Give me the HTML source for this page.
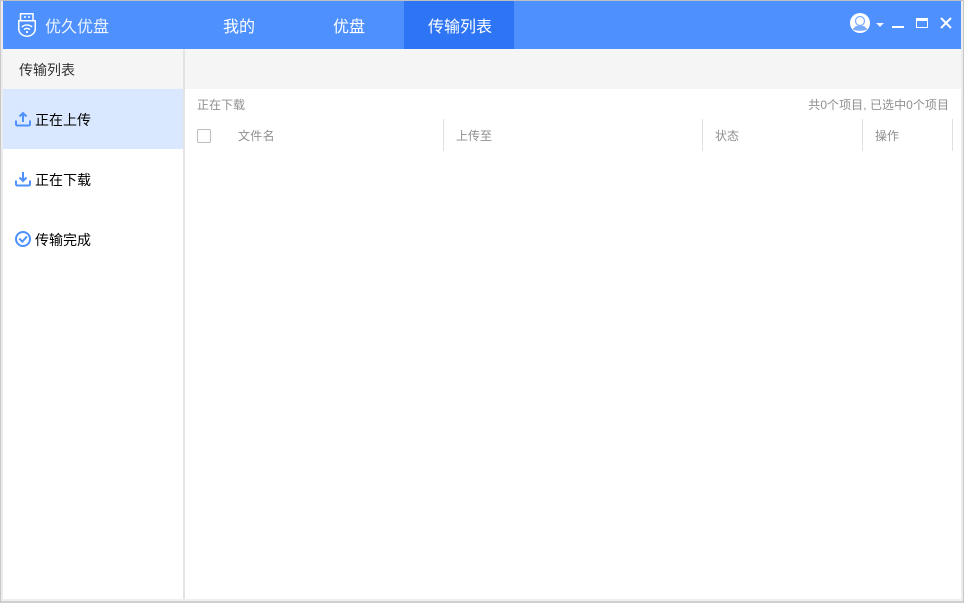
<!DOCTYPE html>
<html><head><meta charset="utf-8">
<style>
html,body{margin:0;padding:0;width:964px;height:603px;overflow:hidden;background:#fff}
body{position:relative;font-family:"Liberation Sans","Noto Sans CJK SC","WenQuanYi Zen Hei",sans-serif}
.a{position:absolute;white-space:nowrap}
.t{line-height:20px;height:20px}
.g{color:#8f8f8f;font-size:12px}
.s{font-size:14px;color:#000}
.n{font-size:16px;color:#fff;line-height:24px;height:24px}
.v{width:1px;background:#e0e0e0;top:119px;height:32px}
</style></head><body>
<div class="a" style="left:0;top:0;width:964px;height:1px;background:#c0c0c0"></div>
<div class="a" style="left:0;top:601px;width:964px;height:2px;background:#cfcfcf"></div>
<div class="a" style="left:0;top:0;width:1px;height:603px;background:#c8c8c8"></div>
<div class="a" style="left:1px;top:1px;width:2px;height:600px;background:#ececec"></div>
<div class="a" style="left:961px;top:1px;width:2px;height:600px;background:#ececec"></div>
<div class="a" style="left:963px;top:0;width:1px;height:603px;background:#c8c8c8"></div>
<div class="a" style="left:3px;top:599px;width:958px;height:2px;background:#efefef"></div>

<div class="a" style="left:3px;top:1px;width:958px;height:48px;background:#4d90fe"></div>
<div class="a" style="left:404px;top:1px;width:110px;height:48px;background:#2e75f5"></div>

<svg class="a" style="left:17px;top:12px" width="20" height="26" viewBox="0 0 20 26" fill="none" stroke="#fff">
<path d="M3.500 8.500V1.750h12.500v6.750" stroke-width="1.500"/>
<path d="M7 5h2M11 5h2" stroke-width="1.500"/>
<path d="M1.750 8.750h16.500v8c0 4-3.700 7.500-8.250 7.500s-8.250-3.500-8.250-7.500z" stroke-width="1.500"/>
<path d="M4.800 15c3-2.800 7.400-2.800 10.400 0M7 17.500c1.900-1.400 4.100-1.400 6 0" stroke-width="1.400"/>
<circle cx="10" cy="20" r="1.100" fill="#fff" stroke="none"/>
</svg>
<div class="a n" style="left:45px;top:16px;color:#eef4ff">优久优盘</div>
<div class="a n" style="left:223px;top:16px">我的</div>
<div class="a n" style="left:333px;top:16px">优盘</div>
<div class="a n" style="left:428px;top:16px">传输列表</div>

<svg class="a" style="left:850px;top:13px" width="20" height="20" viewBox="0 0 20 20">
<circle cx="10" cy="10" r="10" fill="#fff"/>
<circle cx="10" cy="8" r="4.500" fill="#fff" stroke="#7aacfe" stroke-width="1.200"/>
<path d="M2.800 16.500c1.500-3 4-4 7.200-4s5.700 1 7.200 4c-2 1-4.500 1.300-7.200 1.300s-5.200-.3-7.200-1.300z" fill="#7aacfe"/>
</svg>
<div class="a" style="left:876px;top:23px;width:0;height:0;border-left:4px solid transparent;border-right:4px solid transparent;border-top:4px solid #eef4ff"></div>
<div class="a" style="left:892px;top:26px;width:12px;height:2px;background:#fff"></div>
<div class="a" style="left:916px;top:18px;width:10px;height:6px;border:1px solid #fff;border-top-width:3px"></div>
<svg class="a" style="left:940px;top:17px" width="12" height="12" viewBox="0 0 12 12"><path d="M1 1l10 10M11 1L1 11" stroke="#fff" stroke-width="2"/></svg>

<div class="a" style="left:3px;top:49px;width:180px;height:40px;background:#f5f5f5"></div>
<div class="a" style="left:185px;top:49px;width:776px;height:40px;background:#f5f5f5"></div>
<div class="a" style="left:183px;top:49px;width:2px;height:550px;background:#e3e3e3"></div>
<div class="a" style="left:3px;top:89px;width:180px;height:60px;background:#d9e8ff"></div>

<div class="a t" style="left:19px;top:60px;font-size:14px;color:#333">传输列表</div>

<svg class="a" style="left:15px;top:111px" width="16" height="16" viewBox="0 0 16 16" fill="none" stroke="#4d90fe" stroke-width="2">
<path d="M8 11V2M4.500 5.500L8 2l3.500 3.500"/><path d="M1 9.500V13c0 1 .6 1.500 1.500 1.500h11c.9 0 1.500-.5 1.500-1.500V9.500"/></svg>
<div class="a t s" style="left:35px;top:110px">正在上传</div>

<svg class="a" style="left:15px;top:171px" width="16" height="16" viewBox="0 0 16 16" fill="none" stroke="#4d90fe" stroke-width="2">
<path d="M8 1v9M4.500 6.500L8 10l3.500-3.500"/><path d="M1 9.500V13c0 1 .6 1.500 1.500 1.500h11c.9 0 1.500-.5 1.500-1.500V9.500"/></svg>
<div class="a t s" style="left:35px;top:170px">正在下载</div>

<svg class="a" style="left:15px;top:231px" width="16" height="16" viewBox="0 0 16 16" fill="none" stroke="#4d90fe" stroke-width="2">
<circle cx="8" cy="8" r="7"/><path d="M4.300 7.500L7.300 10.700 11.900 5.500" stroke-width="2"/></svg>
<div class="a t s" style="left:35px;top:230px">传输完成</div>

<div class="a t g" style="left:197px;top:95px">正在下载</div>
<div class="a t g" style="right:15px;top:95px;letter-spacing:.05px">共0个项目, 已选中0个项目</div>

<div class="a" style="left:197px;top:129px;width:12px;height:12px;border:1px solid #bdbdbd;border-radius:2px"></div>
<div class="a t g" style="left:238px;top:126px;letter-spacing:.3px">文件名</div>
<div class="a v" style="left:443px"></div>
<div class="a t g" style="left:456px;top:126px">上传至</div>
<div class="a v" style="left:702px"></div>
<div class="a t g" style="left:715px;top:126px">状态</div>
<div class="a v" style="left:862px"></div>
<div class="a t g" style="left:875px;top:126px">操作</div>
<div class="a v" style="left:952px"></div>
</body></html>
